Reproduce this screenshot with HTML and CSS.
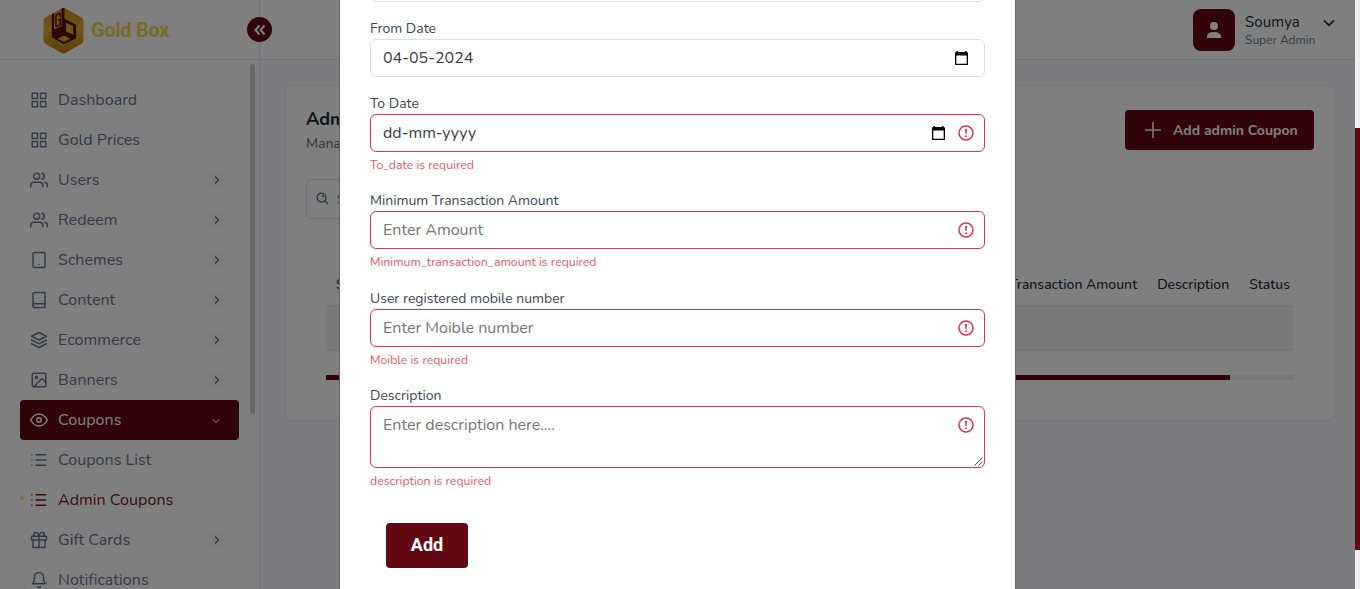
FILE: index.html
```
<!DOCTYPE html>
<html lang="en">
<head>
<meta charset="utf-8">
<title>Gold Box - Admin Coupons</title>
<link rel="stylesheet" href="styles.css">
</head>
<body>
<svg class="defs" width="0" height="0">
  <defs>
    <symbol id="grid" viewBox="0 0 24 24"><path d="M3 3h7v7H3zM14 3h7v7h-7zM14 14h7v7h-7zM3 14h7v7H3z"/></symbol>
    <symbol id="users" viewBox="0 0 24 24"><path d="M17 21v-2a4 4 0 0 0-4-4H5a4 4 0 0 0-4 4v2"/><circle cx="9" cy="7" r="4"/><path d="M23 21v-2a4 4 0 0 0-3-3.87M16 3.13a4 4 0 0 1 0 7.75"/></symbol>
    <symbol id="tablet" viewBox="0 0 24 24"><rect x="4" y="2" width="16" height="20" rx="2"/><path d="M12 18h.01"/></symbol>
    <symbol id="book" viewBox="0 0 24 24"><path d="M4 19.500A2.500 2.500 0 0 1 6.500 17H20"/><path d="M6.500 2H20v20H6.500A2.500 2.500 0 0 1 4 19.500v-15A2.500 2.500 0 0 1 6.500 2z"/></symbol>
    <symbol id="layers" viewBox="0 0 24 24"><path d="M12 2 2 7l10 5 10-5zM2 17l10 5 10-5M2 12l10 5 10-5"/></symbol>
    <symbol id="image" viewBox="0 0 24 24"><rect x="3" y="3" width="18" height="18" rx="2"/><circle cx="8.500" cy="8.500" r="1.500"/><path d="m21 15-5-5L5 21"/></symbol>
    <symbol id="eye" viewBox="0 0 24 24"><path d="M1 12s4-8 11-8 11 8 11 8-4 8-11 8-11-8-11-8z"/><circle cx="12" cy="12" r="3"/></symbol>
    <symbol id="list" viewBox="0 0 24 24"><path d="M8 5h13M8 12h13M8 19h13M2.500 5h.01M2.500 12h.01M2.500 19h.01"/></symbol>
    <symbol id="gift" viewBox="0 0 24 24"><path d="M20 12v10H4V12M2 7h20v5H2zM12 22V7M12 7H7.500a2.500 2.500 0 0 1 0-5C11 2 12 7 12 7zM12 7h4.500a2.500 2.500 0 0 0 0-5C13 2 12 7 12 7z"/></symbol>
    <symbol id="bell" viewBox="0 0 24 24"><path d="M18 8A6 6 0 0 0 6 8c0 7-3 9-3 9h18s-3-2-3-9M13.730 21a2 2 0 0 1-3.460 0"/></symbol>
    <symbol id="chev" viewBox="0 0 10 10"><path d="M3 1.500 6.500 5 3 8.500"/></symbol>
    <symbol id="cal" viewBox="0 0 13 14"><path d="M1.500 0H3v1h7V0h1.500v1q1.500 0 1.500 1.200V14H0V2.200Q0 1 1.500 1zM1.300 4.500v8.200h10.400V4.500z" fill-rule="evenodd"/></symbol>
    <symbol id="warn" viewBox="0 0 16 16"><circle cx="8" cy="8" r="7" fill="none" stroke="currentColor" stroke-width="1.500"/><path d="M7 4h2l-.4 5H7.400z" fill="currentColor"/><circle cx="8" cy="11.200" r="1" fill="currentColor"/></symbol>
  </defs>
</svg>

<div class="app">
  <aside class="sidebar">
    <div class="brand">
      <svg class="brand-mark" viewBox="0 0 42 48">
        <defs><linearGradient id="gold" x1="0" y1="0" x2="0" y2="1"><stop offset="0" stop-color="#c98f20"/><stop offset=".45" stop-color="#dfae36"/><stop offset="1" stop-color="#b98018"/></linearGradient></defs>
        <path fill="url(#gold)" d="M18.500 1.600q2.500-1.400 5 0l16 9q2 1.200 2 3.500v20q0 2.300-2 3.500l-16 9.300q-2.500 1.400-5 0l-16-9.300q-2-1.200-2-3.500v-20q0-2.300 2-3.500z"/>
        <path fill="#620914" d="M9 7.500 11.300 6v17l7.700-3.500V1.500L22 .5V12l12 6v14L21.500 38 9 31z"/>
        <path fill="#ddaa35" d="m23.500 16 7.500 3.800v8.700l-7.500-3.700zM21.500 29l6.500 3.500-6.500 3.300-6.500-3.300z"/>
        <path fill="none" stroke="#620914" stroke-width="1.600" d="M17.600 10V7.500Q17.500 5.800 16 6.600l-1.500.8q-1.300.8-1.300 2.600v8.500q0 1.800 1.500 1l2.900-1.500V12.500l-2.200 1"/>
      </svg>
      <span class="brand-name">Gold Box</span>
      <span class="toggle"><svg viewBox="0 0 12 12"><path d="M5.500 1.500 1.500 6l4 4.500M10.500 1.500l-4 4.500 4 4.500"/></svg></span>
    </div>
    <nav class="menu">
      <a class="item"><svg class="ico"><use href="#grid"/></svg>Dashboard</a>
      <a class="item"><svg class="ico"><use href="#grid"/></svg>Gold Prices</a>
      <a class="item"><svg class="ico"><use href="#users"/></svg>Users<i class="arrow"><svg><use href="#chev"/></svg></i></a>
      <a class="item"><svg class="ico"><use href="#users"/></svg>Redeem<i class="arrow"><svg><use href="#chev"/></svg></i></a>
      <a class="item"><svg class="ico"><use href="#tablet"/></svg>Schemes<i class="arrow"><svg><use href="#chev"/></svg></i></a>
      <a class="item"><svg class="ico"><use href="#book"/></svg>Content<i class="arrow"><svg><use href="#chev"/></svg></i></a>
      <a class="item"><svg class="ico"><use href="#layers"/></svg>Ecommerce<i class="arrow"><svg><use href="#chev"/></svg></i></a>
      <a class="item"><svg class="ico"><use href="#image"/></svg>Banners<i class="arrow"><svg><use href="#chev"/></svg></i></a>
      <a class="item active"><svg class="ico"><use href="#eye"/></svg>Coupons<i class="arrow open"><svg><use href="#chev"/></svg></i></a>
      <a class="item"><svg class="ico thin"><use href="#list"/></svg>Coupons List</a>
      <a class="item current"><svg class="ico thin"><use href="#list"/></svg>Admin Coupons</a>
      <a class="item"><svg class="ico"><use href="#gift"/></svg>Gift Cards<i class="arrow"><svg><use href="#chev"/></svg></i></a>
      <a class="item"><svg class="ico"><use href="#bell"/></svg>Notifications</a>
    </nav>
    <span class="side-thumb"></span>
  </aside>
  <div class="main">
    <header class="topbar">
      <span class="avatar"><svg viewBox="0 0 14 16"><circle cx="7" cy="4" r="4"/><path d="M0 16v-1.500Q0 10 7 10t7 4.500V16z"/></svg></span>
      <span class="who"><span class="who-name">Soumya</span><span class="who-role">Super Admin</span></span>
      <svg class="who-chev" viewBox="0 0 12 8"><path d="m1 1.300 5 5 5-5"/></svg>
    </header>
    <section class="card">
      <div class="card-head">
        <div><h1 class="title">Admin Coupons</h1><p class="subtitle">Manage your Coupons</p></div>
        <span class="add-coupon"><svg viewBox="0 0 16 16"><path d="M8 0v16M0 8h16"/></svg>Add admin Coupon</span>
      </div>
      <div class="search"><svg viewBox="0 0 14 14"><circle cx="6" cy="6" r="4.800"/><path d="m9.500 9.500 3.500 3.500M6 3.500A2.500 2.500 0 0 1 8.300 6"/></svg>Search</div>
      <div class="table">
        <div class="thead"><span class="first">S.No</span><span>Minimum Transaction Amount</span><span>Description</span><span>Status</span></div>
        <div class="empty-row"></div>
        <div class="hscroll"><div class="hthumb"></div></div>
      </div>
    </section>
  </div>
</div>

<div class="backdrop">
  <form class="modal">
    <div class="control prev"></div>
    <div class="field"><label class="label">From Date</label><div class="control"><span class="value">04-05-2024</span><svg class="cal"><use href="#cal"/></svg></div></div>
    <div class="field"><label class="label">To Date</label><div class="control bad"><span class="value">dd-mm-yyyy</span><svg class="cal"><use href="#cal"/></svg><svg class="warn"><use href="#warn"/></svg></div><p class="error">To_date is required</p></div>
    <div class="field"><label class="label">Minimum Transaction Amount</label><div class="control bad"><span class="hint">Enter Amount</span><svg class="warn"><use href="#warn"/></svg></div><p class="error">Minimum_transaction_amount is required</p></div>
    <div class="field"><label class="label">User registered mobile number</label><div class="control bad"><span class="hint">Enter Moible number</span><svg class="warn"><use href="#warn"/></svg></div><p class="error">Moible is required</p></div>
    <div class="field"><label class="label">Description</label><div class="control bad area"><span class="hint">Enter description here....</span><svg class="warn"><use href="#warn"/></svg><svg class="grip" viewBox="0 0 9 9"><path d="M.5 8.500l8-8M4.500 8.500l4-4"/></svg></div><p class="error">description is required</p></div>
    <button class="submit" type="button">Add</button>
  </form>
</div>
<div class="scrollbar"><div class="thumb"></div></div>
</body>
</html>
```
FILE: styles.css
```
* { box-sizing: border-box; }
body { margin: 0; width: 1360px; height: 589px; overflow: hidden; position: relative; font-family: Nunito, Lato, "Noto Sans", sans-serif; font-size: 14px; background: #fff; color: #212b36; }
h1, p { margin: 0; }
svg { flex: none; }
.defs { position: absolute; }

.app { display: flex; width: 1355px; height: 589px; background: #fafbfe; }
.sidebar { position: relative; width: 260px; height: 589px; flex: none; background: #fff; border-right: 1px solid #e4e6ea; }
.brand { position: relative; display: flex; align-items: center; height: 60px; padding-left: 43px; border-bottom: 1px solid #e4e6ea; }
.brand-mark { width: 41px; height: 47px; margin-top: 1px; }
.brand-name { margin-left: 7px; font: 700 20px/24px Roboto, sans-serif; color: #ead64e; letter-spacing: -.3px; margin-top: 1px; }
.toggle { position: absolute; left: 247px; top: 17px; width: 25px; height: 25px; z-index: 1; display: flex; align-items: center; justify-content: center; border-radius: 50%; background: #620914; }
.toggle svg { width: 12px; height: 12px; fill: none; stroke: #fff; stroke-width: 2; }
.menu { display: flex; flex-direction: column; padding: 20px 20px 0; height: 529px; }
.item { position: relative; display: flex; align-items: center; flex: none; height: 40px; padding: 0 11px 0 10px; font-size: 16px; letter-spacing: .05px; color: #67748e; border-radius: 4px; }
.ico { width: 18px; height: 18px; margin: -1px 10px 0 0; fill: none; stroke: currentColor; stroke-width: 2; stroke-linecap: round; stroke-linejoin: round; }
.thin { stroke-width: 1.700; }
.arrow { display: flex; align-items: center; justify-content: center; width: 16px; height: 16px; margin-left: auto; margin-right: 4px; border-radius: 50%; background: #f7f8fa; }
.arrow svg { width: 10px; height: 10px; margin: -1px 0 0 2px; fill: none; stroke: #5d6778; stroke-width: 1.300; }
.open { background: none; transform: rotate(90deg); }
.open svg { margin: -1px 0 0 1px; stroke: #d99436; }
.active { background: #620914; color: #fff; }
.current { color: #7b1420; }
.current::before { content: ""; position: absolute; left: 0; top: 16px; width: 4px; height: 4px; border-radius: 50%; background: #ffca87; }
.side-thumb { position: absolute; left: 250px; top: 64px; width: 5px; height: 350px; border-radius: 3px; background: #ccc; }

.main { flex: 1; }
.topbar { display: flex; align-items: center; justify-content: flex-end; height: 60px; padding-right: 20px; background: #fff; border-bottom: 1px solid #e4e6ea; }
.avatar { display: flex; align-items: center; justify-content: center; width: 42px; height: 42px; border-radius: 8px; background: #620914; }
.avatar svg { width: 14px; height: 16px; fill: #fff; }
.who { display: flex; flex-direction: column; width: 78px; margin: 2px 0 0 10px; }
.who-name { font-size: 15px; line-height: 18px; letter-spacing: .1px; }
.who-role { font-size: 12px; line-height: 18px; color: #6f7983; }
.who-chev { width: 12px; height: 8px; margin: -14px 0 0; fill: none; stroke: #212b56; stroke-width: 1.800; }
.card { width: 1050px; height: 336px; margin: 25px 0 0 25px; padding: 24px 20px 0; background: #fff; border: 1px solid #e8ebed; border-radius: 6px; }
.card-head { display: flex; justify-content: space-between; }
.title { margin-top: -1px; font-size: 18px; line-height: 20px; font-weight: 700; }
.subtitle { margin-top: 5px; line-height: 20px; color: #646b72; }
.add-coupon { display: flex; align-items: center; width: 189px; height: 40px; padding-left: 20px; border-radius: 4px; background: #620914; color: #fff; font-weight: 700; white-space: nowrap; }
.add-coupon svg { width: 16px; height: 16px; margin-right: 12px; fill: none; stroke: #fff; stroke-width: 1.500; }
.search { display: flex; align-items: center; gap: 8px; width: 200px; height: 40px; margin-top: 25px; padding-left: 9px; border: 1px solid #dbe0e6; border-radius: 5px; color: #5b6670; }
.search svg { width: 13px; height: 13px; margin-top: -1px; fill: none; stroke: #5b6670; stroke-width: 1.400; }
.table { margin: 44px 20px 0; }
.thead { display: flex; gap: 20px; height: 42px; padding: 1px 4px 0 10px; line-height: 42px; font-weight: 500; white-space: nowrap; }
.first { margin-right: auto; }
.empty-row { height: 46px; background: #f2f2f2; border: solid #e8ebed; border-width: 1px 0; }
.hscroll { height: 5px; margin-top: 24px; background: #f1f1f1; }
.hthumb { width: 904px; height: 5px; background: #620914; }

.backdrop { position: absolute; inset: 0 5px 0 0; z-index: 5; display: flex; justify-content: center; background: rgba(0, 0, 0, .5); overflow: hidden; }
.modal { width: 677px; height: 589px; padding: 0 30px; background: #fff; border: solid #666; border-width: 0 1px; }
.control { position: relative; display: flex; align-items: center; height: 38px; padding: 0 12px; background: #fff; border: 1px solid #dcdfe5; border-radius: 6px; }
.prev { margin-top: -36px; }
.field { margin-top: 16px; }
.label { display: block; height: 21px; line-height: 21px; color: #3c4651; }
.value, .hint { font-size: 16px; line-height: 24px; margin-right: auto; }
.value { color: #3b4045; }
.hint { color: #757575; }
.cal { width: 13px; height: 14px; margin: -1px 4px 0 0; }
.warn { width: 16px; height: 16px; color: #dc3545; margin-right: -2px; }
.cal + .warn { margin-left: 9px; }
.bad { border-color: #dc3545; }
.area { height: 62px; align-items: flex-start; padding-top: 6px; }
.area .warn { margin-top: 4px; }
.grip { position: absolute; right: 1px; bottom: 1px; width: 9px; height: 9px; fill: none; stroke: #555; stroke-width: 1; }
.error { margin-top: 4px; font-size: 12.250px; line-height: 18.375px; color: #e4566a; }
.submit { display: block; width: 82px; height: 45px; margin: 32px 0 0 16px; padding: 0 0 2px; border: 0; border-radius: 4px; background: #620914; color: #fff; font: 700 18px Roboto, sans-serif; }
.scrollbar { position: absolute; right: 0; top: 0; width: 5px; height: 589px; padding-top: 128px; background: #f1f1f1; }
.thumb { height: 422px; background: #620914; }
```
